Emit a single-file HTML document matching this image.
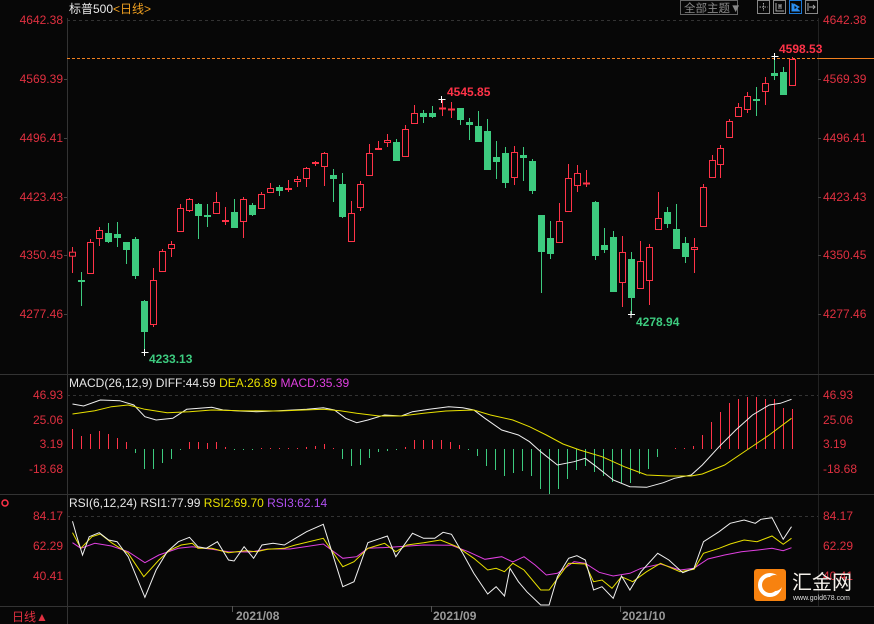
<!DOCTYPE html>
<html><head><meta charset="utf-8"><style>
html,body{margin:0;padding:0;background:#070707;width:874px;height:624px;overflow:hidden}
svg{display:block;font-family:"Liberation Sans","Noto Sans CJK SC",sans-serif}
</style></head><body>
<svg id="s" width="874" height="624" viewBox="0 0 874 624" xmlns="http://www.w3.org/2000/svg">
<rect width="874" height="624" fill="#070707"/>
<line x1="67.5" y1="18" x2="67.5" y2="624" stroke="#333" />
<line x1="818.5" y1="18" x2="818.5" y2="606" stroke="#222" />
<line x1="0" y1="374.5" x2="874" y2="374.5" stroke="#333"/>
<line x1="0" y1="494.5" x2="874" y2="494.5" stroke="#333"/>
<line x1="0" y1="606.5" x2="874" y2="606.5" stroke="#333"/>
<line x1="67" y1="20.5" x2="818" y2="20.5" stroke="#333" stroke-dasharray="3,3"/>
<line x1="67" y1="395.5" x2="818" y2="395.5" stroke="#333" stroke-dasharray="3,3"/>
<line x1="67" y1="516.5" x2="818" y2="516.5" stroke="#333" stroke-dasharray="3,3"/>
<text x="69" y="13" font-size="12" fill="#e8e8e8">标普500<tspan fill="#f0a020">&lt;日线&gt;</tspan></text>
<rect x="680.5" y="0.5" width="57" height="14" fill="none" stroke="#666"/>
<text x="684" y="12" font-size="11.5" fill="#888">全部主题▼</text>
<rect x="757.5" y="0.5" width="12" height="13" fill="none" stroke="#888"/>
<path d="M763.5 3v8M759.5 7h8" stroke="#aaa" stroke-dasharray="1.5,1"/>
<rect x="773.5" y="0.5" width="12" height="13" fill="none" stroke="#888"/>
<path d="M776 3v8h8M779 4v5M781 4v5M779 6h2" stroke="#aaa" fill="none"/>
<rect x="789.5" y="0.5" width="12" height="13" fill="none" stroke="#1e7ad6"/>
<path d="M792 3v8h8M794 4l5 3-5 3z" stroke="#2a8ef0" fill="#2a8ef0"/>
<rect x="805.5" y="0.5" width="12" height="13" fill="none" stroke="#888"/>
<path d="M808 3v8M809 7h6M813 5l2 2-2 2" stroke="#aaa" fill="none"/>
<g font-size="12" fill="#e03040">
<text x="63" y="24" text-anchor="end">4642.38</text>
<text x="63" y="83" text-anchor="end">4569.39</text>
<text x="63" y="142" text-anchor="end">4496.41</text>
<text x="63" y="201" text-anchor="end">4423.43</text>
<text x="63" y="259" text-anchor="end">4350.45</text>
<text x="63" y="318" text-anchor="end">4277.46</text>
<text x="823" y="24">4642.38</text>
<text x="823" y="83">4569.39</text>
<text x="823" y="142">4496.41</text>
<text x="823" y="201">4423.43</text>
<text x="823" y="259">4350.45</text>
<text x="823" y="318">4277.46</text>
<text x="63" y="399" text-anchor="end">46.93</text>
<text x="63" y="424" text-anchor="end">25.06</text>
<text x="63" y="448" text-anchor="end">3.19</text>
<text x="63" y="473" text-anchor="end">-18.68</text>
<text x="823" y="399">46.93</text>
<text x="823" y="424">25.06</text>
<text x="823" y="448">3.19</text>
<text x="823" y="473">-18.68</text>
<text x="63" y="520" text-anchor="end">84.17</text>
<text x="63" y="550" text-anchor="end">62.29</text>
<text x="63" y="580" text-anchor="end">40.41</text>
<text x="823" y="520">84.17</text>
<text x="823" y="550">62.29</text>
<text x="823" y="580">40.41</text>
</g>
<g stroke="#444">
<path d="M64 79.5h3M64 138.5h3M64 197.5h3M64 255.5h3M64 314.5h3M818 79.5h3M818 138.5h3M818 197.5h3M818 255.5h3M818 314.5h3"/>
</g>
<line x1="67" y1="58.5" x2="818" y2="58.5" stroke="#f08020" stroke-dasharray="3,2"/>
<line x1="818" y1="58.5" x2="874" y2="58.5" stroke="#f08020"/>
<g id="candles"></g>
<g font-size="12" font-weight="bold">
<text x="447" y="96" fill="#ff3348">4545.85</text>
<text x="779" y="53" fill="#ff3348">4598.53</text>
<text x="149" y="363" fill="#3dcb7f">4233.13</text>
<text x="636" y="326" fill="#3dcb7f">4278.94</text>
</g>
<text x="69" y="387" font-size="12" fill="#e8e8e8">MACD(26,12,9) DIFF:44.59 <tspan fill="#e8e000">DEA:26.89</tspan> <tspan fill="#e040e0">MACD:35.39</tspan></text>
<g id="hist"></g>
<g id="lines"></g>
<text x="69" y="507" font-size="12" fill="#e8e8e8">RSI(6,12,24) RSI1:77.99 <tspan fill="#e8e000">RSI2:69.70</tspan> <tspan fill="#b050f0">RSI3:62.14</tspan></text>
<circle cx="5" cy="503" r="3" fill="none" stroke="#ff3348" stroke-width="1.5"/>
<rect x="754" y="569" width="32" height="32" rx="3" fill="#f7820f"/>
<circle cx="770" cy="585" r="10" fill="none" stroke="#fff" stroke-width="4"/>
<circle cx="775" cy="583" r="8" fill="#f7820f"/>
<text x="792" y="589" font-size="20" fill="#f4f0ea" font-family="Noto Sans CJK SC,sans-serif">汇金网</text>
<text x="793" y="600" font-size="7" fill="#ddd">www.gold678.com</text>
<text x="12" y="621" font-size="12" fill="#e03040">日线▲</text>
<g font-size="12" fill="#999" font-weight="bold">
<text x="236" y="620">2021/08</text>
<text x="433" y="620">2021/09</text>
<text x="622" y="620">2021/10</text>
</g>
<path d="M232.5 606v6M431.5 606v6M620.5 606v6" stroke="#555"/>
</svg>
<script>
var NS="http://www.w3.org/2000/svg";
function el(t,a,p){var e=document.createElementNS(NS,t);for(var k in a)e.setAttribute(k,a[k]);p.appendChild(e);return e;}
var R="#ff3348",G="#3dcb7f";
var C=[[72.3,251.7,256.7,247,273,1],[81.3,280,281,272,306,0],[90.3,242,274,239,274,1],[99.3,230,239,227,246,1],[108.3,233,242,223,243,0],[117.3,234,238,222,247,0],[126.3,242,250,242,264,0],[135.3,239,276,237,279,0],[144.3,301,332,300,352,0],[153.3,280,325,268,327,1],[162.3,251,272,249,272,1],[171.3,244,249,241,257,1],[180.3,208,232,204,232,1],[189.3,199,211,198,212,1],[198.3,204,216,203,239,0],[207.3,215,217,204,227,0],[216.3,202,214,192,214,1],[225.3,220,221,207,225,1],[234.3,212,228,199,228,0],[243.3,199,222,197,238,1],[252.3,205,215,203,216,0],[261.3,194,209,192,209,1],[270.3,188,193,183,193,1],[279.3,187,191,185,196,0],[288.3,188,189,180,192,1],[297.3,179,182,176,187,1],[306.3,168,179,167,187,1],[315.3,162,164,161,166,1],[324.3,153,167,152,186,1],[333.3,175,179,169,202,0],[342.3,184,217,173,218,0],[351.3,213,242,201,242,1],[360.3,184,208,181,211,1],[369.3,153,176,144,176,1],[378.3,148,149,141,149,1],[387.3,140,143,134,147,1],[396.3,142,161,139,161,0],[405.3,129,157,125,157,1],[414.3,113,124,105,124,1],[423.3,113,117,110,123,0],[432.3,113,117,106,118,0],[441.7,107.5,108.5,99,116,1],[450.7,108.5,109.5,102,118,1],[459.7,108,120,108,125,0],[468.7,122,125,118,140,0],[477.7,126,142,111,142,0],[486.7,131,170,119,170,0],[495.7,157,162,141,179,0],[504.7,153,183,147,188,0],[513.7,152,178,146,185,1],[522.7,155,158,147,181,0],[531.7,161,191,159,194,0],[540.7,215,252,215,293,0],[549.7,238,254,221,259,0],[558.7,221,243,203,243,1],[567.7,178,212,164,212,1],[576.7,173,186,165,192,1],[585.7,182.5,183.5,170,187,1],[594.7,202,256,201,260,0],[603.7,245,250,228,253,0],[612.7,237,292,231,292,0],[621.7,252,283,236,307,1],[630.7,259,298,252,314,0],[639.7,261,289,241,289,1],[648.7,247,281,244,305,1],[657.7,218,230,192,230,1],[666.7,212,224,207,228,0],[675.7,229,249,204,249,0],[684.7,243,257,237,263,0],[693.7,247,250,238,273,1],[702.7,187,227,184,227,1],[711.7,160,178,155,178,1],[720.3,148,165,145,178,1],[729.3,121,138,119,138,1],[738.3,107,117,103,117,1],[747.3,96,110,92,113,1],[756.3,99,100,87,116,0],[765.3,83,92,77,105,1],[774.3,73,76,56,80,0],[783.3,72,95,67,95,0],[792.3,59,86,57,86,1]];
var g=document.getElementById("candles");
C.forEach(function(c){var x=Math.round(c[0])+0.5,col=c[5]?R:G;
el("line",{x1:x,x2:x,y1:c[3],y2:c[4],stroke:col},g);
var h=Math.max(c[2]-c[1],1);
if(c[5]){ if(h<=2) el("rect",{x:x-3.5,y:c[1],width:7,height:2,fill:col},g);
 else el("rect",{x:x-3,y:c[1]+0.5,width:6,height:h-1,fill:"#070707",stroke:col},g);}
else el("rect",{x:x-3.5,y:c[1],width:7,height:Math.max(h,2),fill:col},g);});
[[441.5,99],[631,314],[774.5,56],[144.5,352]].forEach(function(p){el("path",{d:"M"+(p[0]-3)+" "+(p[1]+0.5)+"h7M"+(p[0])+" "+(p[1]-3)+"v7",stroke:"#fff"},g);});
var H=[20,13,15,18,15,11,7,-4,-20,-20,-14,-10,-1,7,7,6,7,2,-1,-1,-1,1,1,1,1,1,2,3,5,1,-10,-17,-16,-9,-3,-2,-1,2,9,9,9,9,7,4,-1,-7,-17,-21,-27,-24,-22,-27,-40,-45,-40,-30,-21,-17,-23,-27,-33,-34,-34,-25,-20,-8,0,1,1,3,14,27,37,46,50,52,52,50,50,41,40];
var hg=document.getElementById("hist");
H.forEach(function(v,i){if(!v)return;var x=Math.round(72.3+9*i)+0.5,b=449;
el("line",{x1:x,x2:x,y1:b,y2:b-v,stroke:v>0?R:G},hg);});
function line(pts,col,parent){var d=pts.map(function(p,i){return (i?"L":"M")+(p[0]/1.794).toFixed(1)+" "+(360+p[1]/3).toFixed(1);}).join("");el("path",{d:d,stroke:col,fill:"none","stroke-width":1},parent);}
var lg=document.getElementById("lines");
line([[130,132],[150,138],[180,120],[215,122],[240,135],[260,170],[280,180],[310,175],[335,148],[380,142],[400,150],[430,153],[460,155],[500,152],[550,148],[580,143],[600,150],[620,175],[640,188],[660,180],[690,165],[720,168],[740,155],[770,148],[805,140],[830,143],[850,150],[870,175],[900,210],[930,225],[950,245],[970,275],[1000,315],[1030,305],[1050,295],[1070,320],[1100,360],[1130,380],[1160,382],[1190,368],[1210,355],[1240,345],[1260,315],[1290,260],[1320,210],[1350,165],[1380,135],[1400,130],[1420,118]],"#f0f0f0",lg);
line([[130,162],[170,152],[200,140],[230,135],[260,148],[300,158],[340,155],[380,150],[430,152],[500,153],[580,148],[610,152],[640,160],[680,168],[720,168],[760,160],[800,153],[850,150],[880,165],[920,180],[950,200],[980,225],[1010,252],[1040,270],[1080,290],[1120,320],[1160,345],[1200,348],[1240,348],[1260,342],[1300,315],[1340,270],[1380,225],[1420,175]],"#e8e000",lg);
line([[130,548],[145,565],[170,550],[200,558],[230,575],[260,608],[285,585],[320,565],[345,560],[380,568],[410,575],[450,576],[480,567],[520,567],[580,552],[615,595],[640,590],[660,565],[700,562],[760,555],[810,556],[840,575],[870,598],[900,590],[920,606],[940,590],[960,615],[980,645],[1000,640],[1030,605],[1050,610],[1075,637],[1100,648],[1130,640],[1150,625],[1185,612],[1220,630],[1245,625],[1270,597],[1300,585],[1330,575],[1360,570],[1385,565],[1405,572],[1420,563]],"#e040e0",lg);
line([[130,518],[145,565],[165,530],[180,522],[200,548],[230,580],[258,650],[285,600],[305,570],[325,555],[345,550],[355,565],[380,565],[410,578],[440,572],[460,575],[480,568],[510,565],[530,555],[580,535],[615,620],[635,605],[660,565],[690,550],[710,575],[730,555],[760,548],[790,540],[820,560],[850,595],[875,630],[890,625],[905,635],[920,610],[940,630],[970,690],[985,690],[1020,610],[1050,612],[1065,665],[1080,660],[1098,685],[1115,650],[1135,665],[1160,635],[1185,610],[1220,635],[1245,628],[1262,580],[1290,565],[1310,552],[1335,540],[1358,545],[1385,528],[1405,553],[1420,535]],"#e8e000",lg);
line([[130,484],[138,530],[148,585],[160,530],[178,518],[195,540],[210,545],[230,590],[260,712],[280,630],[300,575],[320,545],[340,532],[355,560],[370,565],[390,545],[410,600],[420,603],[438,560],[455,595],[470,555],[490,550],[510,555],[530,535],[550,515],[580,493],[615,680],[635,665],[660,548],[695,528],[710,590],[740,520],[760,535],[780,535],[795,517],[810,523],[830,580],[850,640],[875,702],[890,680],[905,708],[915,625],[930,665],[945,695],[970,735],[985,735],[1000,650],[1020,595],[1035,587],[1050,600],[1065,690],[1080,680],[1100,715],[1115,648],[1130,690],[1150,635],[1180,580],[1200,600],[1225,638],[1245,625],[1262,545],[1290,515],[1310,490],[1335,480],[1355,490],[1365,478],[1385,473],[1405,538],[1420,500]],"#f0f0f0",lg);
</script>
</body></html>
